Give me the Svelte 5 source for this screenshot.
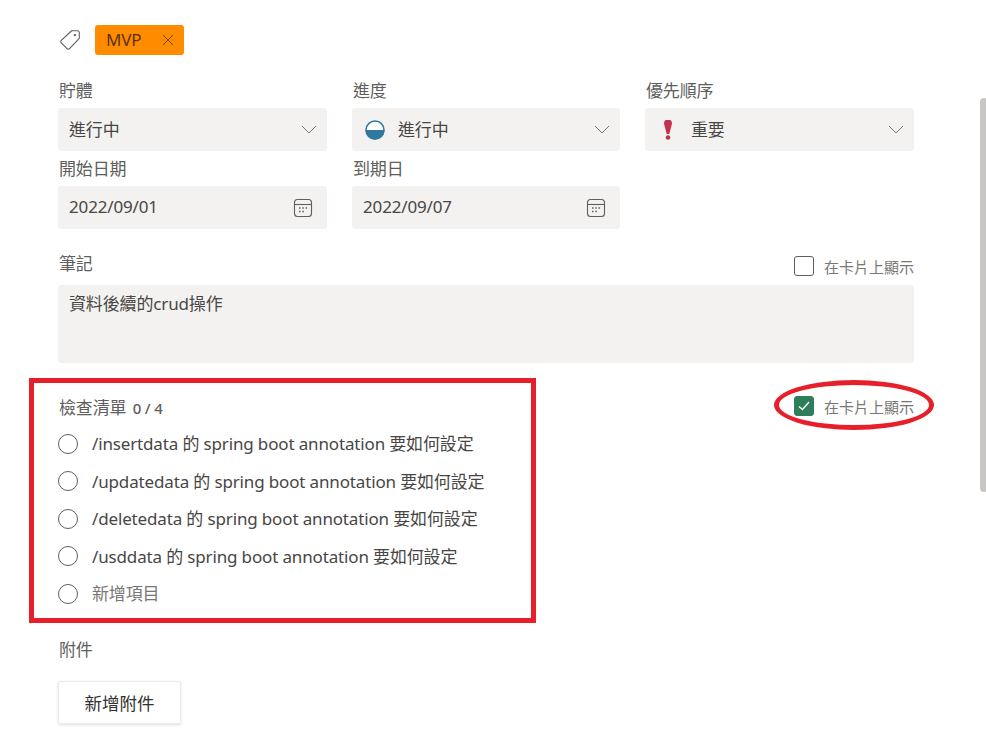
<script>
	const checklist = [
		'/insertdata 的 spring boot annotation 要如何設定',
		'/updatedata 的 spring boot annotation 要如何設定',
		'/deletedata 的 spring boot annotation 要如何設定',
		'/usddata 的 spring boot annotation 要如何設定'
	]
</script>

<div class="page">
	<div class="tags">
		<svg class="tag-icon" width="24" height="24" viewBox="0 0 22 22" fill="none">
			<path d="M12.500 2.500h5.300a1.700 1.700 0 0 1 1.700 1.700v5.300L10.600 19a1.600 1.600 0 0 1-2.300 0L3 13.700a1.600 1.600 0 0 1 0-2.300z" stroke="#605e5c" stroke-width="1" stroke-linejoin="round" />
			<circle cx="15.500" cy="6.500" r="1.100" fill="#605e5c" />
		</svg>
		<span class="chip">
			MVP
			<svg width="12" height="12" viewBox="0 0 12 12" fill="none">
				<path d="M1 1l10 10M11 1L1 11" stroke="#7a4300" stroke-width="1" />
			</svg>
		</span>
	</div>

	<div class="fields">
		<div class="field">
			<span class="label">貯體</span>
			<div class="control">
				<span class="value">進行中</span>
				{@render chevron()}
			</div>
		</div>
		<div class="field">
			<span class="label">進度</span>
			<div class="control">
				<span class="value with-icon">
					<svg width="20" height="20" viewBox="0 0 20 20">
						<circle cx="10" cy="10" r="9" fill="#fff" stroke="#31789f" stroke-width="1.500" />
						<path d="M0.500 10a9.500 9.500 0 0 0 19 0z" fill="#31789f" />
					</svg>
					進行中
				</span>
				{@render chevron()}
			</div>
		</div>
		<div class="field">
			<span class="label">優先順序</span>
			<div class="control">
				<span class="value with-icon">
					<svg width="20" height="20" viewBox="0 0 20 20">
						<path d="M6 3.500a4 4 0 0 1 8 0L11.300 14h-2.600z" fill="#c4314b" />
						<circle cx="10" cy="17.500" r="2.300" fill="#c4314b" />
					</svg>
					重要
				</span>
				{@render chevron()}
			</div>
		</div>
		<div class="field">
			<span class="label">開始日期</span>
			<div class="control">
				<span class="value">2022/09/01</span>
				{@render calendar()}
			</div>
		</div>
		<div class="field">
			<span class="label">到期日</span>
			<div class="control">
				<span class="value">2022/09/07</span>
				{@render calendar()}
			</div>
		</div>
	</div>

	<div class="section-head notes-head">
		<span class="label">筆記</span>
		<label class="on-card">
			<span class="box"></span>
			在卡片上顯示
		</label>
	</div>
	<div class="notes">資料後續的crud操作</div>

	<div class="section-head check-head">
		<span class="label">檢查清單 <small>0 / 4</small></span>
		<label class="on-card">
			<span class="box checked">
				<svg width="12" height="10" viewBox="0 0 12 10" fill="none"><path d="M1 5.500l3.500 3L11 1" stroke="#fff" stroke-width="1.300" /></svg>
			</span>
			在卡片上顯示
		</label>
	</div>
	<ul class="checklist">
		{#each checklist as item}
			<li><span class="radio"></span>{item}</li>
		{/each}
		<li class="add"><span class="radio"></span>新增項目</li>
	</ul>

	<div class="label attach-label">附件</div>
	<button class="attach">新增附件</button>

	<div class="mark-rect"></div>
	<div class="mark-ellipse"></div>
	<div class="scrollbar"></div>
</div>

{#snippet chevron()}
	<svg class="chevron" width="16" height="9" viewBox="0 0 16 9" fill="none"><path d="M1 1l7 7 7-7" stroke="#797775" stroke-width="1" /></svg>
{/snippet}

{#snippet calendar()}
	<svg width="20" height="20" viewBox="0 0 20 20" fill="none">
		<rect x="1.500" y="1.500" width="17" height="17" rx="3" stroke="#605e5c" stroke-width="1.100" />
		<path d="M1.500 6.500h17" stroke="#605e5c" stroke-width="1.100" />
		<path d="M6 10h1.500M9.300 10h1.500M12.600 10h1.500M6 13.500h1.500M9.300 13.500h1.500" stroke="#605e5c" stroke-width="1.500" />
	</svg>
{/snippet}

<style>
	:global(body) {
		background: #fff;
		font-family: "Noto Sans", "Noto Sans CJK TC", sans-serif;
		color: #323130;
		overflow: hidden;
	}

	.page {
		position: relative;
		width: 986px;
		height: 734px;
		box-sizing: border-box;
		padding: 25px 72px 0 58px;
		overflow: hidden;
		font-size: 17px;
		letter-spacing: -0.15px;
	}

	.tags {
		display: flex;
		align-items: center;
		gap: 13px;
		height: 30px;
	}

	.chip {
		display: inline-flex;
		align-items: center;
		justify-content: space-between;
		width: 89px;
		height: 30px;
		box-sizing: border-box;
		padding: 0 10px 1px 11px;
		background: #ff8c00;
		border-radius: 3px;
		color: #5e3100;
	}

	.fields {
		display: grid;
		grid-template-columns: 269px 268px 269px;
		column-gap: 25px;
		margin-top: 23px;
	}

	.field {
		display: flex;
		flex-direction: column;
	}

	.label {
		display: block;
		height: 30px;
		line-height: 26px;
		padding-left: 1px;
		color: #605e5c;
	}

	.label small {
		margin-left: 2px;
		font-size: 15px;
		font-weight: 500;
	}

	.control {
		display: flex;
		align-items: center;
		justify-content: space-between;
		height: 43px;
		box-sizing: border-box;
		padding: 0 14px 0 11px;
		background: #f3f2f1;
		border-radius: 3px;
		margin-bottom: 5px;
		color: #484644;
	}

	.value {
		padding-bottom: 3px;
	}

	.with-icon {
		display: inline-flex;
		align-items: center;
		gap: 13px;
		padding-left: 2px;
	}

	.with-icon svg {
		margin-top: 3px;
	}

	.chevron {
		margin-right: -4px;
	}

	.section-head {
		display: flex;
		justify-content: space-between;
		align-items: center;
	}

	.notes-head {
		margin-top: 15px;
		height: 36px;
	}

	.notes-head .label,
	.check-head .label {
		height: auto;
	}

	.notes-head .label {
		padding-bottom: 6px;
	}

	.notes-head .on-card {
		margin-top: -2px;
	}

	.check-head .on-card {
		margin-top: -4px;
	}

	.on-card {
		display: flex;
		align-items: center;
		gap: 10px;
		font-size: 15px;
		letter-spacing: 0;
		color: #797775;
	}

	.box {
		display: flex;
		align-items: center;
		justify-content: center;
		width: 20px;
		height: 20px;
		box-sizing: border-box;
		border: 1px solid #605e5c;
		border-radius: 3px;
	}

	.box.checked {
		background: #2e7d5b;
		border-color: #2e7d5b;
	}

	.notes {
		height: 78px;
		box-sizing: border-box;
		padding: 7px 11px;
		background: #f3f2f1;
		border-radius: 3px;
		line-height: 24px;
		color: #484644;
	}

	.check-head {
		margin-top: 29px;
		height: 32px;
	}

	.checklist {
		list-style: none;
		margin: 0;
		padding: 0;
	}

	.checklist li {
		display: flex;
		align-items: center;
		gap: 14px;
		height: 37.500px;
		color: #484644;
	}

	.checklist li.add {
		color: #797775;
	}

	.radio {
		width: 20px;
		height: 20px;
		margin-top: 2px;
		box-sizing: border-box;
		border: 1px solid #605e5c;
		border-radius: 50%;
	}

	.attach-label {
		margin-top: 25px;
	}

	.attach {
		display: block;
		width: 123px;
		height: 43px;
		margin-top: 14px;
		padding: 0;
		background: #fff;
		border: 1px solid #edebe9;
		border-radius: 2px;
		box-shadow: 0 1px 3px rgba(0, 0, 0, 0.12);
		font: 400 17.500px "Noto Sans", "Noto Sans CJK TC", sans-serif;
		color: #323130;
	}

	/* annotations drawn over the screenshot */
	.mark-rect {
		position: absolute;
		left: 29px;
		top: 378px;
		width: 507px;
		height: 245px;
		box-sizing: border-box;
		border: 5px solid #e71f2b;
	}

	.mark-ellipse {
		position: absolute;
		left: 774px;
		top: 380px;
		width: 160px;
		height: 50px;
		box-sizing: border-box;
		border: 5px solid #e71f2b;
		border-radius: 50%;
	}

	.scrollbar {
		position: absolute;
		left: 980px;
		top: 98px;
		width: 8px;
		height: 394px;
		background: #c8c6c4;
		border-radius: 4px;
	}
</style>
